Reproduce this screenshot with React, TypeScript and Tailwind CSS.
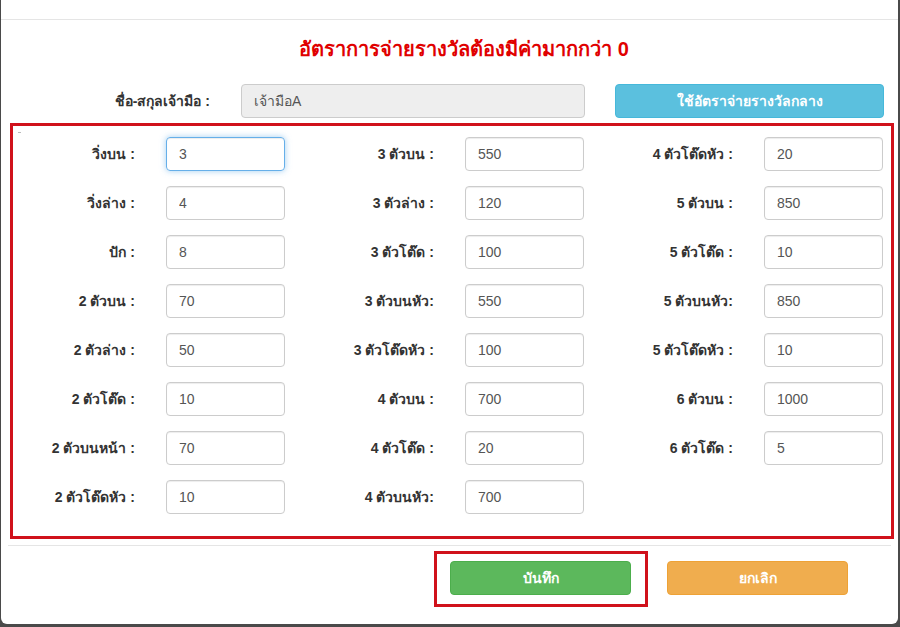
import React from "react";

interface RateField {
  label: string;
  value: string;
  focused?: boolean;
}

const COLUMNS: RateField[][] = [
  [
    { label: "วิ่งบน :", value: "3", focused: true },
    { label: "วิ่งล่าง :", value: "4" },
    { label: "ปัก :", value: "8" },
    { label: "2 ตัวบน :", value: "70" },
    { label: "2 ตัวล่าง :", value: "50" },
    { label: "2 ตัวโต๊ด :", value: "10" },
    { label: "2 ตัวบนหน้า :", value: "70" },
    { label: "2 ตัวโต๊ดหัว :", value: "10" },
  ],
  [
    { label: "3 ตัวบน :", value: "550" },
    { label: "3 ตัวล่าง :", value: "120" },
    { label: "3 ตัวโต๊ด :", value: "100" },
    { label: "3 ตัวบนหัว:", value: "550" },
    { label: "3 ตัวโต๊ดหัว :", value: "100" },
    { label: "4 ตัวบน :", value: "700" },
    { label: "4 ตัวโต๊ด :", value: "20" },
    { label: "4 ตัวบนหัว:", value: "700" },
  ],
  [
    { label: "4 ตัวโต๊ดหัว :", value: "20" },
    { label: "5 ตัวบน :", value: "850" },
    { label: "5 ตัวโต๊ด :", value: "10" },
    { label: "5 ตัวบนหัว:", value: "850" },
    { label: "5 ตัวโต๊ดหัว :", value: "10" },
    { label: "6 ตัวบน :", value: "1000" },
    { label: "6 ตัวโต๊ด :", value: "5" },
  ],
];

const FONT = "font-['Tahoma','Liberation_Sans','Noto_Sans',sans-serif]";

function RateInput({ field }: { field: RateField }) {
  return (
    <div className="flex h-[34px] items-center">
      <label className="w-[122px] shrink-0 text-right text-[14px] font-bold text-[#333]">
        {field.label}
      </label>
      <input
        readOnly
        value={field.value}
        className={
          field.focused
            ? "ml-[31px] h-[34px] w-[119px] shrink-0 rounded-[4px] border border-[#66afe9] px-3 text-[14px] text-[#555] shadow-[inset_0_1px_1px_rgba(0,0,0,0.075),0_0_6px_rgba(102,175,233,0.6)] outline-none"
            : "ml-[31px] h-[34px] w-[119px] shrink-0 rounded-[4px] border border-[#ccc] px-3 text-[14px] text-[#555] shadow-[inset_0_1px_1px_rgba(0,0,0,0.075)] outline-none"
        }
      />
    </div>
  );
}

export default function App() {
  return (
    <div className={`h-[627px] w-[900px] overflow-hidden bg-[#4a4a4a] ${FONT}`}>
      <div className="ml-[1px] flex h-[624px] w-[897px] flex-col rounded-b-[6px] bg-white">
        {/* Header (top cut off) */}
        <div className="h-[20px] border-b border-[#e5e5e5]" />

        {/* Body */}
        <div className="pl-[9px] pr-[4px]">
          <h2 className="mt-[17px] pl-[24px] text-center text-[20px] font-bold leading-[24px] text-[#e00000]">
            อัตราการจ่ายรางวัลต้องมีค่ามากกว่า 0
          </h2>

          {/* Dealer name row */}
          <div className="mt-[23px] flex h-[34px] items-center">
            <label className="w-[200px] text-right text-[14px] font-bold text-[#333]">
              ชื่อ-สกุลเจ้ามือ :
            </label>
            <input
              readOnly
              value="เจ้ามือA"
              className="ml-[31px] h-[34px] w-[344px] rounded-[4px] border border-[#ccc] bg-[#eee] px-3 text-[14px] text-[#555] outline-none"
            />
            <button
              type="button"
              className="ml-[30px] h-[34px] w-[269px] rounded-[4px] border border-[#46b8da] bg-[#5bc0de] text-[14px] font-bold text-white"
            >
              ใช้อัตราจ่ายรางวัลกลาง
            </button>
          </div>

          {/* Rates grid */}
          <div className="relative mt-[5px] h-[416px] border-[3px] border-[#d0111b] pt-[11px]">
            <span className="absolute left-[5px] top-[6px] h-px w-[3px] bg-[#bbb]" />
            <div className="flex">
              {COLUMNS.map((col, i) => (
                <div key={i} className="flex w-[299px] shrink-0 flex-col gap-[15px]">
                  {col.map((f) => (
                    <RateInput key={f.label} field={f} />
                  ))}
                </div>
              ))}
            </div>
          </div>
        </div>

        {/* Footer */}
        <div className="mx-[7px] mt-[6px] border-t border-[#e5e5e5]" />
        <div className="mt-[5px] flex items-start">
          <div className="ml-[433px] border-[3px] border-[#d0111b] pb-[9px] pl-[13px] pr-[14px] pt-[7px]">
            <button
              type="button"
              className="h-[34px] w-[181px] rounded-[4px] border border-[#4cae4c] bg-[#5cb85c] text-[14px] font-bold text-white"
            >
              บันทึก
            </button>
          </div>
          <button
            type="button"
            className="ml-[19px] mt-[10px] h-[34px] w-[181px] rounded-[4px] border border-[#eea236] bg-[#f0ad4e] text-[14px] font-bold text-white"
          >
            ยกเลิก
          </button>
        </div>
      </div>
    </div>
  );
}
